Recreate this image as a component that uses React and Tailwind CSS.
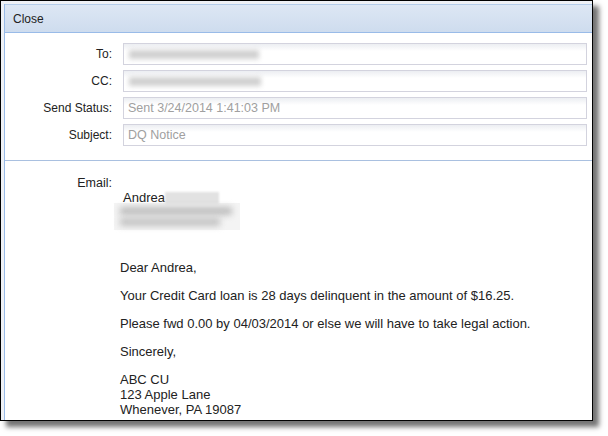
export default function App() {
  const font = { fontFamily: '"Liberation Sans", Arial, sans-serif' };
  const Row = ({ label, children }) => (
    <div className="flex items-center h-[22px]">
      <div className="w-[107px] text-right text-[12px] text-[#222]">{label}</div>
      <div className="ml-[11px] flex-1 h-[22px] border border-[#d3d3de] bg-linear-to-b from-[#eceef2] to-white to-[35%] flex items-center px-[4px] text-[12.5px] text-[#a0a0a0]">
        {children}
      </div>
    </div>
  );
  return (
    <div className="w-[608px] h-[436px] bg-white" style={font}>
      <div className="w-[593px] h-[421px] border border-black bg-[#eef1f6] pl-[3px] pt-[3px] shadow-[6px_6px_5px_rgba(0,0,0,0.55)] flex flex-col">
        <div className="flex-1 flex flex-col border-l border-[#99bbe8] bg-white">
          <div className="h-[29px] border-t border-b border-t-[#b5cdea] border-b-[#99bbe8] bg-linear-to-b from-[#dde7f4] to-[#cedcee] flex items-center pl-[8px] text-[12px] text-[#222]">
            Close
          </div>
          <div className="pt-[10px] pr-[5px] flex flex-col gap-[5px]">
            <Row label="To:">
              <div className="ml-[1px] w-[130px] h-[9px] bg-[#d0d0d0] blur-[2.5px]" />
            </Row>
            <Row label="CC:">
              <div className="ml-[1px] w-[132px] h-[9px] bg-[#d0d0d0] blur-[2.5px]" />
            </Row>
            <Row label="Send Status:">Sent 3/24/2014 1:41:03 PM</Row>
            <Row label="Subject:">DQ Notice</Row>
          </div>
          <div className="mt-[14px] h-px bg-[#a9c0e0]" />
          <div className="flex pt-[15px] text-[13px] text-[#222]">
            <div className="w-[107px] text-right leading-[15px] text-[12.5px]">Email:</div>
            <div className="ml-[11px] flex-1 flex flex-col">
              <div className="mt-[14px] flex items-center h-[15px] leading-[15px]">
                <span>Andrea</span>
                <div className="w-[54px] h-[12px] bg-[#e2e2e2] blur-[1px]" />
              </div>
              <div className="-mt-[2px] -ml-[9px] w-[126px] h-[27px] bg-[#f4f4f4] flex flex-col justify-center gap-[3px] px-[6px]">
                <div className="w-[112px] h-[8px] bg-[#bdbdbd] blur-[3px]" />
                <div className="w-[100px] h-[8px] bg-[#c2c2c2] blur-[3px]" />
              </div>
              <div className="-ml-[3px] mt-[30px] flex flex-col gap-[13px] leading-[15px]">
                <div>Dear Andrea,</div>
                <div>Your Credit Card loan is 28 days delinquent in the amount of $16.25.</div>
                <div>Please fwd 0.00 by 04/03/2014 or else we will have to take legal action.</div>
                <div>Sincerely,</div>
                <div>
                  <div>ABC CU</div>
                  <div>123 Apple Lane</div>
                  <div>Whenever, PA 19087</div>
                </div>
              </div>
            </div>
          </div>
        </div>
      </div>
    </div>
  );
}
